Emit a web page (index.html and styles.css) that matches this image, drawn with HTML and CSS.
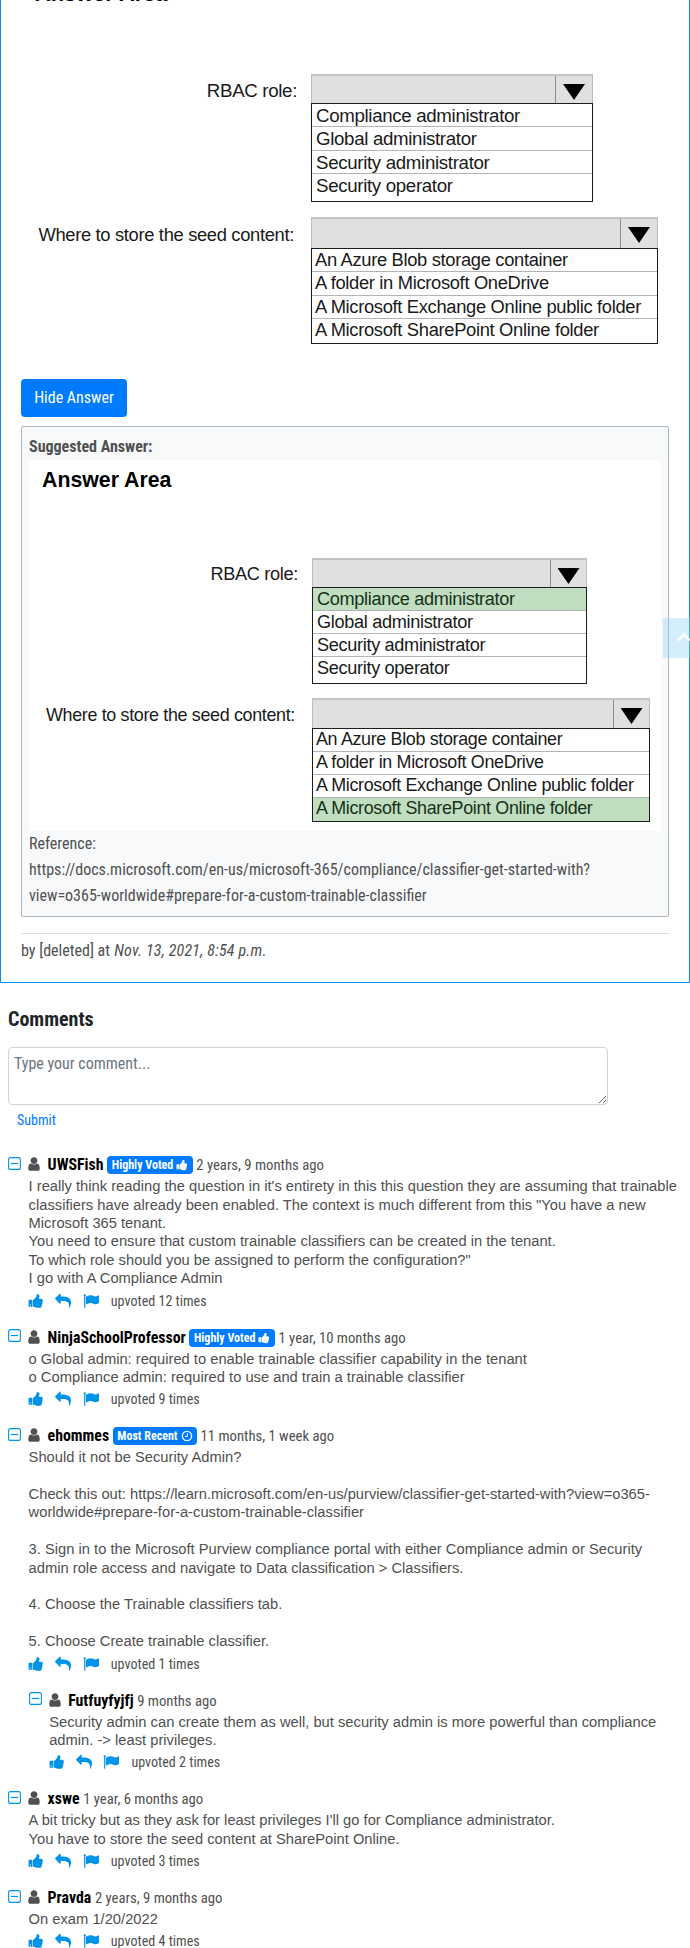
FILE: index.html
```html
<!DOCTYPE html>
<html lang="en">
<head>
<meta charset="utf-8">
<title>Discussion</title>
<link rel="stylesheet" href="styles.css">
</head>
<body>
<svg class="sprite" aria-hidden="true">
  <symbol id="user" viewBox="0 0 1792 1792"><path d="M1536 1399q0 109-62.5 187t-150.5 78h-854q-88 0-150.5-78t-62.5-187q0-85 8.5-160.5t31.5-152 58.5-131 94-89 134.5-34.5q131 128 313 128t313-128q76 0 134.5 34.5t94 89 58.5 131 31.5 152 8.5 160.5zm-256-887q0 159-112.5 271.5t-271.5 112.5-271.5-112.5-112.5-271.5 112.5-271.5 271.5-112.5 271.5 112.5 112.5 271.5z"/></symbol>
  <symbol id="reply" viewBox="0 0 1792 1792"><path d="M1792 1120q0 166-127 451-3 7-10.5 24t-13.5 30-13 22q-12 17-28 17-15 0-23.5-10t-8.5-25q0-9 2.5-26.5t2.5-23.5q5-68 5-123 0-101-17.5-181t-48.5-138.5-80-101-105.5-69.5-133-42.5-154-21.5-175.5-6h-224v256q0 26-19 45t-45 19-45-19l-512-512q-19-19-19-45t19-45l512-512q19-19 45-19t45 19 19 45v256h224q713 0 875 403 53 134 53 333z"/></symbol>
  <symbol id="flag" viewBox="0 0 1792 1792"><path d="M320 256q0 72-64 110v1266q0 13-9.500 22.500t-22.500 9.500h-64q-13 0-22.500-9.500t-9.500-22.500v-1266q-64-38-64-110 0-53 37.500-90.500t90.500-37.500 90.500 37.500 37.500 90.500zm1472 64v763q0 25-12.500 38.500t-39.500 27.500q-215 116-369 116-61 0-123.500-22t-108.500-48-115.500-48-142.500-22q-192 0-464 146-17 9-33 9-26 0-45-19t-19-45v-742q0-32 31-55 21-14 79-43 236-120 421-120 107 0 200 29t219 88q38 19 88 19 54 0 117.500-21t110-47 88-47 54.500-21q26 0 45 19t19 45z"/></symbol>
  <symbol id="thumb" viewBox="0 0 1792 1792"><path d="M320 1344q0-26-19-45t-45-19q-27 0-45.500 19t-18.500 45q0 27 18.500 45.500t45.500 18.500q26 0 45-18.500t19-45.500zm160-512v640q0 26-19 45t-45 19h-288q-26 0-45-19t-19-45v-640q0-26 19-45t45-19h288q26 0 45 19t19 45zm1184 0q0 86-55 149 15 44 15 76 3 76-43 137 17 56 0 117-15 57-54 94 9 112-49 181-64 76-197 78h-129q-66 0-144-15.500t-121.500-29-120.500-39.500q-123-43-158-44-26-1-45-19.500t-19-44.500v-641q0-25 18-43.500t43-20.500q24-2 76-59t101-121q68-87 101-120 18-18 31-48t17.500-48.500 13.500-60.500q7-39 12.500-61t19.500-52 34-50q19-19 45-19 46 0 82.500 10.500t60 26 40 40.500 24 45 12 50 5 45 .5 39q0 38-9.500 76t-19 60-27.500 56q-3 6-10 18t-11 22-8 24h277q78 0 135 57t57 135z"/></symbol>
  <symbol id="clock" viewBox="0 0 12 12"><circle cx="6" cy="6" r="4.600" fill="none" stroke="currentColor" stroke-width="1.300"/><path d="M6.300 3.300V6.500H4" fill="none" stroke="currentColor"/></symbol>
  <symbol id="collapse" viewBox="0 0 13 13"><rect x=".6" y=".6" width="11.800" height="11.800" rx="2" fill="none" stroke="currentColor" stroke-width="1.100"/><path d="M2.800 6.500h7.400" stroke="currentColor" stroke-width="1.200"/></symbol>
</svg>

<main class="card">
  <div class="diagram diagram-question">
    <div class="diagram-title">Answer Area</div>
    <div class="field field-role">
      <div class="label">RBAC role:</div>
      <div class="select">
        <div class="head"><span class="caret"></span></div>
        <ul class="options"><li>Compliance administrator</li><li>Global administrator</li><li>Security administrator</li><li>Security operator</li></ul>
      </div>
    </div>
    <div class="field field-store">
      <div class="label">Where to store the seed content:</div>
      <div class="select">
        <div class="head"><span class="caret"></span></div>
        <ul class="options"><li>An Azure Blob storage container</li><li>A folder in Microsoft OneDrive</li><li>A Microsoft Exchange Online public folder</li><li>A Microsoft SharePoint Online folder</li></ul>
      </div>
    </div>
  </div>

  <button class="hide-answer">Hide Answer</button>

  <section class="answer">
    <strong class="answer-title">Suggested Answer:</strong>
    <div class="diagram diagram-answer">
      <div class="diagram-title">Answer Area</div>
      <div class="field field-role">
        <div class="label">RBAC role:</div>
        <div class="select">
          <div class="head"><span class="caret"></span></div>
          <ul class="options"><li class="correct">Compliance administrator</li><li>Global administrator</li><li>Security administrator</li><li>Security operator</li></ul>
        </div>
      </div>
      <div class="field field-store">
        <div class="label">Where to store the seed content:</div>
        <div class="select">
          <div class="head"><span class="caret"></span></div>
          <ul class="options"><li>An Azure Blob storage container</li><li>A folder in Microsoft OneDrive</li><li>A Microsoft Exchange Online public folder</li><li class="correct">A Microsoft SharePoint Online folder</li></ul>
        </div>
      </div>
    </div>
    <p class="reference">Reference:<br>https://docs.microsoft.com/en-us/microsoft-365/compliance/classifier-get-started-with?<br>view=o365-worldwide#prepare-for-a-custom-trainable-classifier</p>
  </section>

  <p class="byline">by [deleted] at <i>Nov. 13, 2021, 8:54 p.m.</i></p>
</main>

<section class="comments">
  <h2>Comments</h2>
  <textarea placeholder="Type your comment..."></textarea>
  <a class="submit">Submit</a>

  <article class="comment">
    <header><svg class="toggle"><use href="#collapse"/></svg><svg class="avatar"><use href="#user"/></svg><b class="name">UWSFish</b><span class="badge">Highly Voted <svg><use href="#thumb"/></svg></span><time>2 years, 9 months ago</time></header>
    <p class="body">I really think reading the question in it's entirety in this this question they are assuming that trainable<br>classifiers have already been enabled. The context is much different from this "You have a new<br>Microsoft 365 tenant.<br>You need to ensure that custom trainable classifiers can be created in the tenant.<br>To which role should you be assigned to perform the configuration?"<br>I go with A Compliance Admin</p>
    <footer><svg><use href="#thumb"/></svg><svg><use href="#reply"/></svg><svg><use href="#flag"/></svg><span>upvoted 12 times</span></footer>
  </article>

  <article class="comment">
    <header><svg class="toggle"><use href="#collapse"/></svg><svg class="avatar"><use href="#user"/></svg><b class="name">NinjaSchoolProfessor</b><span class="badge">Highly Voted <svg><use href="#thumb"/></svg></span><time>1 year, 10 months ago</time></header>
    <p class="body">o Global admin: required to enable trainable classifier capability in the tenant<br>o Compliance admin: required to use and train a trainable classifier</p>
    <footer><svg><use href="#thumb"/></svg><svg><use href="#reply"/></svg><svg><use href="#flag"/></svg><span>upvoted 9 times</span></footer>
  </article>

  <article class="comment">
    <header><svg class="toggle"><use href="#collapse"/></svg><svg class="avatar"><use href="#user"/></svg><b class="name">ehommes</b><span class="badge">Most Recent <svg><use href="#clock"/></svg></span><time>11 months, 1 week ago</time></header>
    <p class="body">Should it not be Security Admin?<br><br>Check this out: https://learn.microsoft.com/en-us/purview/classifier-get-started-with?view=o365-<br>worldwide#prepare-for-a-custom-trainable-classifier<br><br>3. Sign in to the Microsoft Purview compliance portal with either Compliance admin or Security<br>admin role access and navigate to Data classification &gt; Classifiers.<br><br>4. Choose the Trainable classifiers tab.<br><br>5. Choose Create trainable classifier.</p>
    <footer><svg><use href="#thumb"/></svg><svg><use href="#reply"/></svg><svg><use href="#flag"/></svg><span>upvoted 1 times</span></footer>
  </article>

  <article class="comment nested">
    <header><svg class="toggle"><use href="#collapse"/></svg><svg class="avatar"><use href="#user"/></svg><b class="name">Futfuyfyjfj</b><time>9 months ago</time></header>
    <p class="body">Security admin can create them as well, but security admin is more powerful than compliance<br>admin. -&gt; least privileges.</p>
    <footer><svg><use href="#thumb"/></svg><svg><use href="#reply"/></svg><svg><use href="#flag"/></svg><span>upvoted 2 times</span></footer>
  </article>

  <article class="comment">
    <header><svg class="toggle"><use href="#collapse"/></svg><svg class="avatar"><use href="#user"/></svg><b class="name">xswe</b><time>1 year, 6 months ago</time></header>
    <p class="body">A bit tricky but as they ask for least privileges I'll go for Compliance administrator.<br>You have to store the seed content at SharePoint Online.</p>
    <footer><svg><use href="#thumb"/></svg><svg><use href="#reply"/></svg><svg><use href="#flag"/></svg><span>upvoted 3 times</span></footer>
  </article>

  <article class="comment">
    <header><svg class="toggle"><use href="#collapse"/></svg><svg class="avatar"><use href="#user"/></svg><b class="name">Pravda</b><time>2 years, 9 months ago</time></header>
    <p class="body">On exam 1/20/2022</p>
    <footer><svg><use href="#thumb"/></svg><svg><use href="#reply"/></svg><svg><use href="#flag"/></svg><span>upvoted 4 times</span></footer>
  </article>
</section>

<a class="to-top"><svg viewBox="0 0 27 40"><path d="M15 22.500l6-6 6 6" fill="none" stroke="#fff" stroke-width="2.400"/></svg></a>
</body>
</html>
```
FILE: styles.css
```css
* { box-sizing: border-box; }
html { overflow: hidden; }
body {
  position: relative;
  margin: 0;
  width: 690px;
  height: 1948px;
  overflow: hidden;
  background: #fff;
  color: #505050;
  font: 16px/26px "Roboto Condensed", Roboto, sans-serif;
}
p, h2, ul { margin: 0; padding: 0; }
.sprite { display: none; }
svg { fill: currentColor; flex: none; }

.card {
  height: 983px;
  padding: 0 20px;
  border: 1px solid #0094e9;
  border-top: 0;
  overflow: hidden;
}

/* Drop-down diagrams */
.diagram {
  font-family: "Liberation Sans", Arial, sans-serif;
  color: #1a1a1a;
}
.diagram-title {
  height: 28px;
  line-height: 28px;
  font-weight: bold;
  color: #000;
  white-space: nowrap;
}
.field { display: flex; justify-content: flex-start; letter-spacing: -.33px; }
.label { text-align: right; white-space: nowrap; flex: none; }
.select { flex: none; }
.head {
  display: flex;
  justify-content: flex-end;
  background: #e0e0e0;
  border: 1px solid #bdbdbd;
  border-top: 2px solid #c4c4c4;
  border-bottom: 0;
}
.caret {
  display: flex;
  justify-content: center;
  width: 37px;
  padding-top: 8px;
  border-left: 1px solid #8c8c8c;
}
.caret::before {
  content: "";
  width: 22px;
  height: 16px;
  background: #000;
  clip-path: polygon(0 0, 100% 0, 50% 100%);
}
.options { list-style: none; border: 1px solid #1c1c1c; background: #fff; }
.options li {
  height: 23.4px;
  padding-left: 3px;
  border-bottom: 1px solid #b4b4b4;
  white-space: nowrap;
}
.options li:last-child { border-bottom: 0; }
.options .correct { background: #c1dfc0; color: #17301a; }

.diagram-question { height: 399px; margin-top: -20px; }
.diagram-question .diagram-title { padding-left: 14px; font-size: 21.8px; }
.diagram-question .field-role { margin-top: 66px; height: 143px; font-size: 18.7px; line-height: 23.4px; }
.diagram-question .label { width: 276px; margin-right: 14px; }
.diagram-question .field-role .label { line-height: 33px; }
.diagram-question .field-role .select { width: 282px; }
.diagram-question .field-role .head { height: 29px; }
.diagram-question .field-role .options { height: 99px; }
.diagram-question .field-role li { padding-left: 4px; }
.diagram-question .field-store { font-size: 18.350px; line-height: 22px; }
.diagram-question .field-store .label { width: 273px; margin-right: 17px; line-height: 35px; }
.diagram-question .field-store .select { width: 347px; }
.diagram-question .field-store .head { height: 31px; }
.diagram-question .field-store .options { height: 96px; }

.hide-answer {
  display: block;
  width: 106px;
  height: 38px;
  padding: 0;
  border: 0;
  border-radius: 4px;
  background: #007bff;
  color: #fff;
  font: 16px/38px "Roboto Condensed", Roboto, sans-serif;
}

.answer {
  height: 491px;
  margin-top: 9px;
  padding: 7px;
  border: 1px solid #adb5bd;
  border-radius: 2px;
  background: #f8f9fa;
}
.answer-title { display: block; height: 26px; }
.diagram-answer { height: 371px; background: #fff; }
.diagram-answer .diagram-title { padding: 6px 0 0 13px; height: 34px; font-size: 21.3px; }
.diagram-answer .field-role { margin-top: 64px; height: 140px; font-size: 18.150px; line-height: 23.2px; }
.diagram-answer .label { width: 269px; margin-right: 14px; line-height: 33px; }
.diagram-answer .field-role .select { width: 275px; }
.diagram-answer .field-role .head { height: 29px; }
.diagram-answer .field-role .options { height: 97px; }
.diagram-answer .field-role li { padding-left: 4px; }
.diagram-answer .field-store { font-size: 17.900px; line-height: 21px; }
.diagram-answer .field-store .label { width: 266px; margin-right: 17px; line-height: 34px; }
.diagram-answer .field-store .select { width: 338px; }
.diagram-answer .field-store .head { height: 30px; }
.diagram-answer .field-store .options { height: 94px; }
.diagram-answer .options li { height: 22.900px; }
.diagram-answer .caret { width: 36px; }
.diagram-answer .options li:last-child { height: 23.400px; }

.byline {
  margin-top: 16px;
  padding-top: 4px;
  border-top: 1px solid #dedede;
}
.byline i { letter-spacing: .18px; margin-left: .6px; }

/* Comments */
.comments { padding: 24px 8px 0; }
h2 { height: 40px; font-size: 20px; line-height: 24px; font-weight: bold; color: #212529; }
textarea {
  display: block;
  width: 600px;
  height: 58px;
  padding: 4px 5px;
  border: 1px solid #ced4da;
  border-radius: 4px;
  font: 16px/24px "Roboto Condensed", Roboto, sans-serif;
}
textarea::placeholder { color: #6c757d; opacity: 1; }
.submit {
  display: block;
  height: 20px;
  margin: 5px 0 23.200px 9px;
  font-size: 14px;
  line-height: 20px;
  color: #007bff;
}
.comment { padding-left: 20.600px; margin-bottom: 11.900px; }
.nested { margin-left: 20.600px; }
.comment header {
  display: flex;
  height: 24px;
  margin-left: -20.600px;
  line-height: 24px;
}
.toggle { width: 13px; height: 13px; margin: 3.600px 5px 0 0; color: #0094e9; }
.avatar { width: 16px; height: 16px; margin: 3px 5.600px 0 0; color: #505050; }
.name { color: #000; margin-right: 3.600px; font-size: 15.850px; }
time { font-size: 14.720px; }
.badge {
  display: flex;
  align-items: center;
  gap: 3px;
  height: 18px;
  margin: 3.200px 3.400px 0 0;
  padding: 0 4.600px;
  border-radius: 4px;
  background: #007bff;
  color: #fff;
  font-size: 12px;
  line-height: 18px;
  font-weight: bold;
}
.badge svg { width: 12px; height: 12px; }
.body {
  font: 14.720px/18.400px "Liberation Sans", Arial, sans-serif;
  white-space: nowrap;
}
.comment footer {
  display: flex;
  gap: 12px;
  height: 26px;
  padding-top: 1px;
  font-size: 14.080px;
  line-height: 25px;
}
.comment footer svg { width: 16px; height: 16px; margin-top: 4px; color: #0094e9; margin-left: -.6px; }
.comment footer span { margin-left: 0; }

.to-top {
  position: absolute;
  left: 663px;
  top: 618px;
  width: 27px;
  height: 40px;
  background: rgba(135, 206, 245, .35);
}
.to-top svg { display: block; width: 27px; height: 40px; }
```
